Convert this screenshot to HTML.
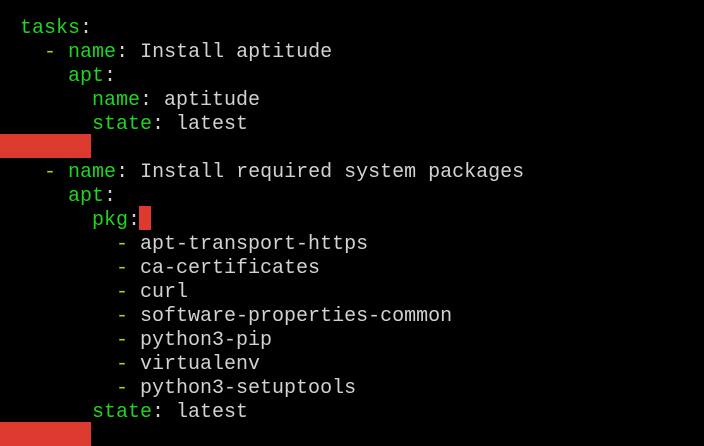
<!DOCTYPE html>
<html><head><meta charset="utf-8"><style>
html,body{margin:0;padding:0;background:#000;width:704px;height:433px;overflow:hidden}
pre{margin:0;position:absolute;left:20px;top:17px;font-family:"Liberation Mono","DejaVu Sans Mono",monospace;font-size:20px;line-height:24px;color:#d2d2d2}
.g{color:#1fd51f}.y{color:#c8c800}
.r{position:absolute;background:#dc3a2f}
</style></head><body>
<div class="r" style="left:0;top:134px;width:91px;height:24px"></div>
<div class="r" style="left:139px;top:206px;width:12px;height:24px"></div>
<div class="r" style="left:0;top:422px;width:91px;height:24px"></div>
<pre><span class="g">tasks</span>:
  <span class="y">-</span> <span class="g">name</span>: Install aptitude
    <span class="g">apt</span>:
      <span class="g">name</span>: aptitude
      <span class="g">state</span>: latest

  <span class="y">-</span> <span class="g">name</span>: Install required system packages
    <span class="g">apt</span>:
      <span class="g">pkg</span>:
        <span class="y">-</span> apt-transport-https
        <span class="y">-</span> ca-certificates
        <span class="y">-</span> curl
        <span class="y">-</span> software-properties-common
        <span class="y">-</span> python3-pip
        <span class="y">-</span> virtualenv
        <span class="y">-</span> python3-setuptools
      <span class="g">state</span>: latest
</pre>
</body></html>
